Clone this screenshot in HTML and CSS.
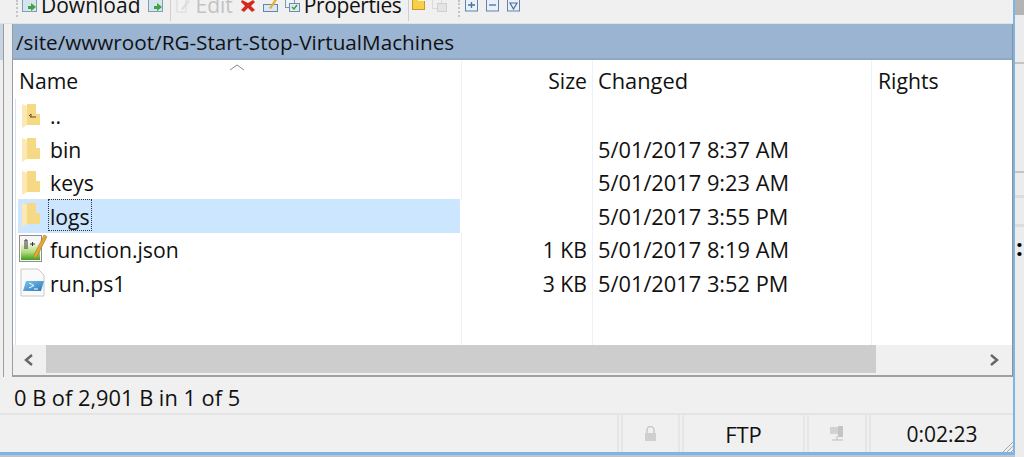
FILE: index.html
```html
<!DOCTYPE html>
<html lang="en">
<head>
<meta charset="utf-8">
<title>WinSCP</title>
<link rel="stylesheet" href="styles.css">
</head>
<body>
<svg width="0" height="0" class="defs">
  <defs>
    <linearGradient id="green" x1="0" y1="0" x2="0" y2="1"><stop offset="0" stop-color="#eef6dc"/><stop offset="0.5" stop-color="#b4dc7c"/><stop offset="1" stop-color="#3f9c22"/></linearGradient>
    <linearGradient id="blue" x1="0" y1="0" x2="1" y2="1"><stop offset="0" stop-color="#7cc4f0"/><stop offset="1" stop-color="#2a78b8"/></linearGradient>
    <symbol id="folder" viewBox="0 0 18 26"><path d="M5 1h9v10h4v11H5z" fill="#f6d985"/><path d="M0 1l5 2v19l-5 3z" fill="#fbe8b4"/></symbol>
  </defs>
</svg>
<div class="app">
  <div class="toolbar">
    <span class="grip"></span>
    <svg class="tool" width="15" height="14" viewBox="0 0 15 14"><rect x="0.500" y="0.500" width="14" height="12" fill="#d6e4ee" stroke="#7f9db5"/><path d="M6 7h3V4l5 4-5 4V10H6z" fill="#3fa33f"/></svg>
    <span class="tool-text">Download</span>
    <svg class="tool" width="15" height="14" viewBox="0 0 15 14"><rect x="0.500" y="0.500" width="14" height="12" fill="#d6e4ee" stroke="#7f9db5"/><path d="M6 7h3V4l5 4-5 4V10H6z" fill="#3fa33f"/></svg>
    <span class="sep"></span>
    <svg class="tool" width="15" height="14" viewBox="0 0 15 14"><path d="M1 0h9v13H1z" fill="#f2f2f2" stroke="#d8d8d8"/><path d="M5 10l7-9 2 1-7 9z" fill="#dcdcdc"/></svg>
    <span class="tool-text muted">Edit</span>
    <svg class="tool" width="15" height="14" viewBox="0 0 15 14"><path d="M1 1l6 3 5-3 2 2-4 4 4 4-3 2-4-4-4 4-3-2 4-4-4-4z" fill="#d42a1e"/></svg>
    <svg class="tool" width="15" height="14" viewBox="0 0 15 14"><rect x="0.500" y="5.500" width="14" height="7" fill="#dbe8f4" stroke="#5f86b0"/><path d="M6 9l6-9 2 1-6 9z" fill="#e8b02c"/></svg>
    <svg class="tool" width="15" height="14" viewBox="0 0 15 14"><rect x="0.500" y="0.500" width="9" height="8" fill="#eef3f8" stroke="#7d97b0"/><rect x="4.500" y="4.500" width="10" height="8" fill="#dfe9f3" stroke="#6e8eae"/><path d="M7 8l2 2 3-4" fill="none" stroke="#3b9a3b" stroke-width="1.400"/></svg>
    <span class="tool-text props">Properties</span>
    <span class="sep"></span>
    <svg class="tool folder-tool" width="15" height="14" viewBox="0 0 15 14"><rect x="0.500" y="1.500" width="12" height="10" fill="#f6cf4b" stroke="#c99b22"/><rect x="6" y="0" width="7" height="3" fill="#fff6c8"/></svg>
    <svg class="tool" width="15" height="14" viewBox="0 0 15 14"><rect x="0.500" y="0.500" width="9" height="9" fill="#f0f0f0" stroke="#dadada"/><rect x="5.500" y="4.500" width="9" height="8" fill="#e4e4e4" stroke="#cfcfcf"/></svg>
    <span class="grip grip2"></span>
    <svg class="mini" width="13" height="13" viewBox="0 0 13 13"><rect x="0.500" y="0" width="12" height="12" fill="#eaf0f7" stroke="#5f83ad"/><path d="M3 6h7M6.500 3v6" stroke="#4a6f9c" stroke-width="1.300"/></svg>
    <svg class="mini" width="13" height="13" viewBox="0 0 13 13"><rect x="0.500" y="0" width="12" height="12" fill="#eaf0f7" stroke="#5f83ad"/><path d="M3 6h7" stroke="#4a6f9c" stroke-width="1.300"/></svg>
    <svg class="mini" width="13" height="13" viewBox="0 0 13 13"><rect x="0.500" y="0" width="12" height="12" fill="#eaf0f7" stroke="#5f83ad"/><path d="M3 4h7L6.500 10z" fill="none" stroke="#4a6f9c" stroke-width="1.200"/></svg>
  </div>
  <div class="middle">
    <div class="panel">
      <div class="path">/site/wwwroot/RG-Start-Stop-VirtualMachines</div>
      <div class="list">
        <div class="row head">
          <div class="cell name">Name<svg class="sort" width="16" height="7" viewBox="0 0 16 7"><path d="M1 6l7-5 7 5" fill="none" stroke="#8a8a8a"/></svg></div>
          <div class="cell size">Size</div>
          <div class="cell changed">Changed</div>
          <div class="cell rights">Rights</div>
        </div>
        <div class="rows">
          <div class="row">
            <div class="cell name"><svg class="ficon" width="18" height="26" viewBox="0 0 18 26"><use href="#folder"/><path d="M8 14h6M9 14v-3l-2 2" fill="none" stroke="#5a4a20"/></svg>..</div>
            <div class="cell size"></div><div class="cell changed"></div><div class="cell rights"></div>
          </div>
          <div class="row">
            <div class="cell name"><svg class="ficon" width="18" height="26"><use href="#folder"/></svg>bin</div>
            <div class="cell size"></div><div class="cell changed">5/01/2017 8:37 AM</div><div class="cell rights"></div>
          </div>
          <div class="row">
            <div class="cell name"><svg class="ficon" width="18" height="26"><use href="#folder"/></svg>keys</div>
            <div class="cell size"></div><div class="cell changed">5/01/2017 9:23 AM</div><div class="cell rights"></div>
          </div>
          <div class="row">
            <div class="cell name selected"><svg class="ficon" width="18" height="26"><use href="#folder"/></svg><span class="focus">logs</span></div>
            <div class="cell size"></div><div class="cell changed">5/01/2017 3:55 PM</div><div class="cell rights"></div>
          </div>
          <div class="row">
            <div class="cell name"><svg class="ficon wide" width="28" height="30" viewBox="0 0 28 30"><rect x="0.500" y="1.500" width="22" height="26" fill="#f6f6f6" stroke="#8f8f8f"/><rect x="2" y="10" width="19" height="16" fill="url(#green)"/><path d="M6 15V6h2v9M11 10h5M13.500 8v4" fill="none" stroke="#333"/><path d="M15 21L25 1l3 1.500-10 20-3 2.500z" fill="#e6a832" stroke="#9a6c1c" stroke-width="0.500"/></svg>function.json</div>
            <div class="cell size">1 KB</div><div class="cell changed">5/01/2017 8:19 AM</div><div class="cell rights"></div>
          </div>
          <div class="row">
            <div class="cell name"><svg class="ficon wide" width="28" height="30" viewBox="0 0 28 30"><path d="M2 1h17l6 6v21H2z" fill="#fafafa" stroke="#c8c8c8"/><path d="M7 13h18l-3 10H4z" fill="url(#blue)"/><path d="M10 15l5 2.500-5 2.500M15 21h4" fill="none" stroke="#fff"/></svg>run.ps1</div>
            <div class="cell size">3 KB</div><div class="cell changed">5/01/2017 3:52 PM</div><div class="cell rights"></div>
          </div>
          <div class="fill">
            <div class="cell name"></div><div class="cell size"></div><div class="cell changed"></div><div class="cell rights"></div>
          </div>
        </div>
      </div>
      <div class="scrollbar">
        <svg class="arrow" width="33" height="14" viewBox="0 0 33 14"><path d="M19 2l-6 5 6 5" fill="none" stroke="#666" stroke-width="2.400"/></svg>
        <div class="thumb"></div>
        <svg class="arrow" width="136" height="14" viewBox="0 0 136 14"><path d="M115 2l6 5-6 5" fill="none" stroke="#666" stroke-width="2.400"/></svg>
      </div>
    </div>
  </div>
  <div class="summary">0 B of 2,901 B in 1 of 5</div>
  <div class="status">
    <div class="stat s-fill"></div>
    <div class="stat s-lock"><svg width="13" height="16" viewBox="0 0 13 16"><path d="M3 7V4a3.500 3.500 0 0 1 7 0v3" fill="none" stroke="#c8c8c8" stroke-width="1.500"/><rect x="1" y="7" width="11" height="8" fill="#cfcfcf"/></svg></div>
    <div class="stat s-proto">FTP</div>
    <div class="stat s-net"><svg width="16" height="16" viewBox="0 0 16 16"><rect x="1" y="1" width="10" height="7" fill="#d2d2d2"/><rect x="9" y="0" width="5" height="11" fill="#c4c4c4"/><path d="M8 10v4M3 14h11" stroke="#bdbdbd"/></svg></div>
    <div class="stat s-time">0:02:23</div>
    <svg class="resize" width="11" height="11" viewBox="0 0 11 11"><path d="M11 1L1 11M11 5l-6 6M11 9l-2 2" stroke="#a8a8a8"/></svg>
  </div>
</div>
<div class="side">
  <div class="side-top"></div>
  <div class="side-a"></div>
  <div class="side-b"></div>
  <div class="side-c"></div>
  <div class="side-d"></div>
  <div class="side-dots">:</div>
</div>
</body>
</html>
```
FILE: styles.css
```css
* { box-sizing: border-box; }
html, body { margin: 0; height: 100%; }
body {
  width: 1024px;
  height: 457px;
  overflow: hidden;
  background: #c4c4c4;
  font-family: "Open Sans", "Noto Sans", sans-serif;
  font-size: 21.200px;
  color: #111;
  display: flex;
  align-items: flex-start;
}
.defs { position: absolute; }
.app {
  flex: none;
  display: flex;
  flex-direction: column;
  width: 1015px;
  height: 455px;
  background: #f0f0f0;
  border-right: 2px solid #7db4ea;
  border-bottom: 3px solid #7db4ea;
}
.side { flex: 1; height: 457px; background: #ececec; display: flex; flex-direction: column; }
.side-top { height: 15px; background: #b4b4b4; }
.side-a { height: 49px; border-bottom: 2px solid #c4c4c4; }
.side-b { height: 109px; border-bottom: 2px solid #c4c4c4; }
.side-c { height: 25px; border-bottom: 3px solid #dcdcdc; }
.side-d { height: 29px; border-bottom: 3px solid #dcdcdc; }
.side-dots { padding-left: 1px; font-size: 24px; font-weight: 700; line-height: 40px; color: #000; }
.toolbar {
  flex: none;
  height: 24px;
  padding-left: 16px;
  display: flex;
  align-items: flex-end;
  gap: 7px;
  overflow: hidden;
  border-bottom: 1px solid #e2e2e2;
}
.grip { width: 3px; height: 17px; margin: 0 -4px 6px 0; border-left: 2px dotted #c4c4c4; flex: none; }
.grip2 { margin-left: 4px; }
.tool { flex: none; margin-bottom: 10px; }
.folder-tool { margin: 0 -2px 11px -2px; }
.mini { flex: none; margin: 0 0 11px 1px; }
.tool-text { font-size: 21px; line-height: 28px; margin: 0 1px 4px -3px; white-space: nowrap; flex: none; }
.props { letter-spacing: -0.400px; margin-right: 0; }
.muted { color: #c3c3c3; }
.sep { width: 1px; height: 21px; background: #cfcfcf; margin: 0 -2px 2px 0; flex: none; }
.middle {
  flex: none;
  height: 353px;
  padding-left: 12px;
  background:
    linear-gradient(#c5d3e3, #c5d3e3) 0 0 / 3px 36px no-repeat,
    linear-gradient(to right, #f0f0f0 3px, #9c9c9c 3px, #9c9c9c 4px, #f0f0f0 4px);
}
.panel {
  height: 100%;
  border-left: 1px solid #9c9c9c;
  border-right: 1px solid #8f8f8f;
  border-bottom: 2px solid #a0a0a0;
  display: flex;
  flex-direction: column;
}
.path {
  flex: none;
  height: 36px;
  background: #9ab4d2;
  border-bottom: 2px solid #90a8c4;
  padding-left: 3px;
  font-size: 20.700px;
  line-height: 37px;
  white-space: nowrap;
}
.list { flex: none; height: 285px; background: #fff; display: flex; flex-direction: column; }
.row { display: grid; grid-template-columns: 449px 131px 279px 1fr; height: 33.600px; flex: none; }
.head { height: 39px; }
.rows {
  flex: 1;
  display: flex;
  flex-direction: column;
  background: linear-gradient(#d4e4f6, #d4e4f6) 2px 0 / 1px 100% no-repeat;
}
.fill { flex: 1; display: grid; grid-template-columns: 449px 131px 279px 1fr; }
.cell {
  padding-left: 6px;
  line-height: 33px;
  white-space: nowrap;
  border-right: 1px solid #eef2f8;
  position: relative;
}
.head .cell { line-height: 41px; }
.name { display: flex; align-items: center; padding-bottom: 2px; }
.size { text-align: right; padding-left: 0; padding-right: 5px; }
.changed { padding-left: 5px; font-size: 21.800px; }
.rights { border-right: 0; }
.sort { position: absolute; left: 216px; top: 4px; }
.ficon { flex: none; margin: 1px 10px 0 3px; }
.ficon.wide { margin: -1px 3px 0 0; }
.selected { background: #cce6ff; margin: -1px 2px 1px 5px; padding-left: 1px; border-right: 0; }
.focus { border: 1px dotted #333; line-height: 33px; height: 32px; padding: 0 1px; margin: 0 0 0 -2px; }
.scrollbar { flex: 1; display: flex; padding-bottom: 2px; align-items: stretch; }
.arrow { flex: none; align-self: center; margin-top: 1px; }
.thumb { width: 830px; background: #cdcdcd; }
.summary { flex: none; height: 38px; padding-left: 14px; line-height: 42px; font-size: 21.800px; border-bottom: 2px solid #e4e4e4; white-space: nowrap; }
.status { flex: 1; display: flex; gap: 2px; position: relative; }
.stat { display: flex; align-items: center; justify-content: center; border-left: 2px solid #e6e6e6; border-right: 2px solid #e6e6e6; font-size: 21px; }
.s-fill { flex: 1; border-left: 0; }
.s-lock { width: 59px; }
.s-proto { width: 123px; font-size: 22px; }
.s-net { width: 60px; }
.s-time { width: 144px; border-right: 0; }
.resize { position: absolute; right: 0; bottom: 0; }
```
